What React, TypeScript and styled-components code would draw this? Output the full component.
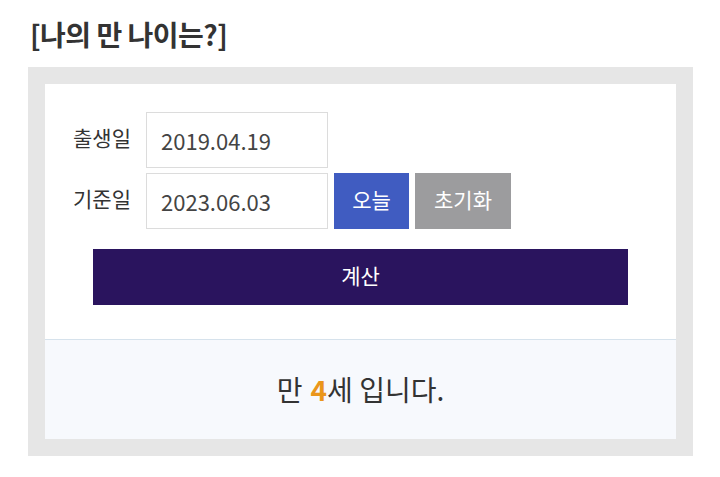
import styled, { createGlobalStyle } from "styled-components";

const GlobalStyle = createGlobalStyle`
  html, body {
    margin: 0;
    padding: 0;
    background: #ffffff;
    font-family: "Noto Sans CJK KR", "Noto Sans", sans-serif;
  }
`;

const SPage = styled.div`
  padding: 14px 27px 0 28px;
`;

const STitle = styled.h2`
  margin: 0 0 13px 2px;
  font-size: 28px;
  font-weight: 700;
  line-height: 40px;
  color: #333333;
  letter-spacing: -0.5px;
`;

const SFrame = styled.div`
  width: 665px;
  box-sizing: border-box;
  padding: 17px;
  background: #e6e6e6;
`;

const SForm = styled.div`
  background: #ffffff;
  padding: 28px 48px 34px 28px;
  display: flex;
  flex-direction: column;
`;

const SRow = styled.div`
  display: flex;
  align-items: center;
  gap: 6px;
  height: 56px;

  & + & {
    margin-top: 5px;
  }
`;

const SLabel = styled.label`
  width: 67px;
  font-size: 21px;
  color: #333333;
  line-height: 1;
  padding-bottom: 5px;
`;

const SInput = styled.input`
  width: 182px;
  height: 56px;
  box-sizing: border-box;
  border: 1px solid #dcdcdc;
  padding: 0 14px;
  font-family: inherit;
  font-size: 22px;
  color: #444444;
  outline: none;
`;

const SButton = styled.button<{ $bg: string; $w: number }>`
  width: ${(p) => p.$w}px;
  height: 56px;
  border: none;
  background: ${(p) => p.$bg};
  color: #ffffff;
  font-family: inherit;
  font-size: 21px;
  line-height: 1;
  padding: 0 0 4px;
  cursor: pointer;
`;

const SCalc = styled.button`
  margin: 20px 0 0 20px;
  height: 56px;
  border: none;
  background: #2a145e;
  color: #ffffff;
  font-family: inherit;
  font-size: 21px;
  line-height: 1;
  padding: 0 0 4px;
  cursor: pointer;
`;

const SResult = styled.div`
  height: 100px;
  border-top: 1px solid #d6e2ec;
  background: #f7f9fd;
  display: flex;
  align-items: center;
  justify-content: center;
  font-size: 28px;
  font-weight: 400;
  color: #333333;
  padding-bottom: 2px;
  box-sizing: border-box;
`;

const SAge = styled.strong`
  color: #ea961b;
  font-weight: 700;
  margin-left: 8px;
`;

const App = () => {
  return (
    <SPage>
      <GlobalStyle />
      <STitle>[나의 만 나이는?]</STitle>
      <SFrame>
        <SForm>
          <SRow>
            <SLabel>출생일</SLabel>
            <SInput defaultValue="2019.04.19" />
          </SRow>
          <SRow>
            <SLabel>기준일</SLabel>
            <SInput defaultValue="2023.06.03" />
            <SButton $bg="#405cc1" $w={75}>
              오늘
            </SButton>
            <SButton $bg="#9c9c9e" $w={96}>
              초기화
            </SButton>
          </SRow>
          <SCalc>계산</SCalc>
        </SForm>
        <SResult>
          만<SAge>4</SAge>세 입니다.
        </SResult>
      </SFrame>
    </SPage>
  );
};

export default App;
